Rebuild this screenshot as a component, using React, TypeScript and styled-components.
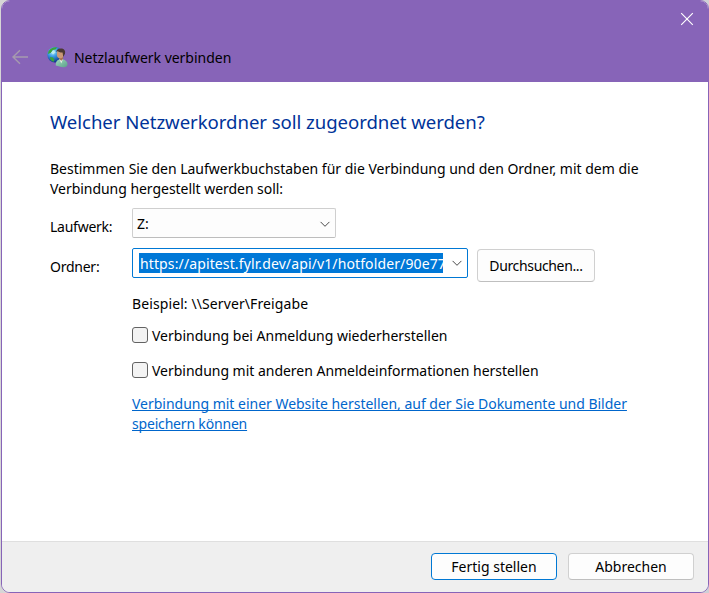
import React from "react";
import styled, { createGlobalStyle } from "styled-components";

const GlobalStyle = createGlobalStyle`
  *, *::before, *::after { box-sizing: border-box; }
  html, body { margin: 0; background: #d2d2d6; }
  body { overflow: hidden; }
  button, input { font: inherit; color: inherit; }
`;

const Desktop = styled.div`
  width: 709px;
  height: 593px;
  padding-left: 1px;
  background: linear-gradient(90deg, #d6d6d6, #cfcfd6);
  font-family: "Noto Sans", "Open Sans", sans-serif;
  font-size: 14px;
  line-height: 20px;
  color: #000;
`;

const Dialog = styled.div`
  display: flex;
  flex-direction: column;
  width: 708px;
  height: 593px;
  border: 1px solid #8764b8;
  border-radius: 9px;
  background: #fff;
  overflow: hidden;
`;

const TitleBar = styled.header`
  flex: none;
  height: 81px;
  background: #8764b8;
`;

const CaptionRow = styled.div`
  display: flex;
  justify-content: flex-end;
  height: 37px;
  padding: 11px 14px 0 0;
`;

const CloseButton = styled.button`
  width: 14px;
  height: 14px;
  padding: 0;
  border: 0;
  background: none;
  svg { display: block; }
`;

const TitleRow = styled.div`
  display: flex;
  align-items: center;
  height: 40px;
  padding-left: 9px;
`;

const BackIcon = styled.svg`
  flex: none;
  margin: 0 18px 2px 0;
`;

const NetworkUserIcon = styled.svg`
  flex: none;
  margin: 0 6px 2px 0;
`;

const Text = styled.span<{ $spacing?: number }>`
  letter-spacing: ${(p) => p.$spacing ?? 0}px;
  white-space: nowrap;
`;

const Content = styled.main`
  flex: 1;
  padding: 26px 48px 0;
`;

const Heading = styled.h1`
  margin: 0 0 24px;
  font-size: 18.6px;
  font-weight: 400;
  line-height: 27px;
  letter-spacing: -0.05px;
  color: #003399;
  white-space: nowrap;
`;

const Intro = styled.p`
  margin: 0;
  white-space: nowrap;
  letter-spacing: -0.01px;
`;

const Form = styled.div`
  display: grid;
  grid-template-columns: 82px 1fr;
  margin-top: 9px;
`;

const Label = styled.label`
  height: 40px;
  padding-top: 9px;
  letter-spacing: -0.25px;
`;

const FieldRow = styled.div`
  display: flex;
  align-items: flex-start;
`;

const Combo = styled.div<{ $width: number; $active?: boolean }>`
  display: flex;
  align-items: center;
  justify-content: space-between;
  width: ${(p) => p.$width}px;
  height: 30px;
  padding: ${(p) => (p.$active ? "0 4px 0 6px" : "1px 4px 0")};
  border: 1px solid ${(p) => (p.$active ? "#0078d4" : "#cfcfcf")};
  border-bottom-color: ${(p) => (p.$active ? "#0078d4" : "#bdbdbd")};
  border-radius: 2px;
  background: ${(p) => (p.$active ? "#fff" : "#fdfdfd")};
`;

const Selection = styled.span`
  width: 304px;
  height: 20px;
  margin-bottom: 1px;
  padding-left: 1px;
  overflow: hidden;
  background: #0078d7;
  color: #fff;
  line-height: 21px;
  letter-spacing: 0.12px;
  white-space: nowrap;
`;

const Button = styled.button<{ $width: number; $height: number; $default?: boolean; $spacing?: number }>`
  display: flex;
  align-items: center;
  justify-content: center;
  width: ${(p) => p.$width}px;
  height: ${(p) => p.$height}px;
  padding: 0;
  border: 1px solid ${(p) => (p.$default ? "#0078d4" : "#d0d0d0")};
  border-bottom-color: ${(p) => (p.$default ? "#0078d4" : "#bfbfbf")};
  border-radius: 4px;
  background: #fdfdfd;
  letter-spacing: ${(p) => p.$spacing ?? 0}px;
`;

const BrowseButton = styled(Button)`
  margin: 1px 0 0 9px;
`;

const Details = styled.div`
  grid-column: 2;
  padding-top: 6px;
`;

const CheckRow = styled.label<{ $gap: number }>`
  display: flex;
  align-items: center;
  gap: 4px;
  height: 20px;
  margin-top: ${(p) => p.$gap}px;
`;

const CheckBox = styled.input.attrs({ type: "checkbox" })`
  appearance: none;
  width: 16px;
  height: 16px;
  margin: 0 0 2px;
  border: 1px solid #626262;
  border-radius: 3px;
  background: #f3f3f3;
`;

const WebLink = styled.a`
  display: block;
  margin-top: 13px;
  color: #0066cc;
  text-decoration: underline;
  text-decoration-thickness: 1px;
  text-decoration-skip-ink: none;
  text-underline-offset: 1px;
`;

const Footer = styled.footer`
  display: flex;
  flex: none;
  justify-content: flex-end;
  gap: 11px;
  height: 51px;
  padding: 11px 14px 0 0;
  border-top: 1px solid #dfdfdf;
  background: #efefef;
`;

const Chevron = () => (
  <svg width="12" height="8" viewBox="0 0 12 8" fill="none">
    <path d="M1.6 1.9 6 6.3 10.4 1.9" stroke="#4a4a4a" strokeWidth="1" />
  </svg>
);

export default function App() {
  return (
    <>
      <GlobalStyle />
      <Desktop>
        <Dialog>
          <TitleBar>
            <CaptionRow>
              <CloseButton aria-label="Schließen">
                <svg width="14" height="14" viewBox="0 0 14 14">
                  <path d="M1.2 1.2 12.8 12.8M12.8 1.2 1.2 12.8" stroke="#fff" strokeWidth="1.15" />
                </svg>
              </CloseButton>
            </CaptionRow>
            <TitleRow>
              <BackIcon width="18" height="16" viewBox="0 0 18 16" fill="none">
                <path d="M9 1.2 2 8l7 6.8M2 8h15" stroke="#a69aae" strokeWidth="1.4" />
              </BackIcon>
              <NetworkUserIcon width="21" height="22" viewBox="0 0 21 22">
                <defs>
                  <radialGradient id="globe" cx="0.35" cy="0.3" r="0.75">
                    <stop offset="0" stopColor="#b4edff" />
                    <stop offset="0.4" stopColor="#3b9fe5" />
                    <stop offset="1" stopColor="#09257f" />
                  </radialGradient>
                  <linearGradient id="shirt" x1="0" y1="0" x2="1" y2="1">
                    <stop offset="0" stopColor="#a1d8bd" />
                    <stop offset="1" stopColor="#5ba18b" />
                  </linearGradient>
                </defs>
                <circle cx="8" cy="8.8" r="7.7" fill="url(#globe)" />
                <path d="M1.4 5.5C3.4 2 7 .9 10 1.4L8.6 3.4 5.8 4 4 6.8 1 8ZM3 11l3 .5 1.5 2.2L6.4 16 3.6 14Z" fill="#3ba33a" />
                <path d="M4 6.5 7 4.2l1.5 2.2L6 8.5Z" fill="#c4f1ef" opacity=".8" />
                <path d="M8.8 19.5c-.2-4 1.4-6.2 5-6.3 4 0 6.7 2 6.7 5.2 0 2.3-3.4 3.2-6.3 2.7Z" fill="url(#shirt)" />
                <path d="m12.2 13 2.1 4.5 1.7-4.4Z" fill="#e4eee7" />
                <path d="M12 10.3h4l.1 2.8-1.8 1.7-2.1-1.7Z" fill="#a87352" />
                <ellipse cx="13.2" cy="8" rx="3.4" ry="4.3" fill="#cb9a76" />
                <path d="M9.4 6.2C9.2 4 11 2.6 13.7 2.6c3.4 0 5 2 4.3 5.2l-1.8 3.2-.6-4.4c-2.3.1-4.4-.6-5-1.5Z" fill="#4b3833" />
              </NetworkUserIcon>
              <Text $spacing={-0.02}>Netzlaufwerk verbinden</Text>
            </TitleRow>
          </TitleBar>

          <Content>
            <Heading>Welcher Netzwerkordner soll zugeordnet werden?</Heading>
            <Intro>
              Bestimmen Sie den Laufwerkbuchstaben für die Verbindung und den Ordner, mit dem die
              <br />
              <Text $spacing={-0.04}>Verbindung hergestellt werden soll:</Text>
            </Intro>
            <Form>
              <Label>Laufwerk:</Label>
              <FieldRow>
                <Combo $width={204}>
                  <Text>Z:</Text>
                  <Chevron />
                </Combo>
              </FieldRow>
              <Label>Ordner:</Label>
              <FieldRow>
                <Combo $width={336} $active>
                  <Selection>https://apitest.fylr.dev/api/v1/hotfolder/90e77</Selection>
                  <Chevron />
                </Combo>
                <BrowseButton $width={118} $height={33} $spacing={-0.35}>Durchsuchen...</BrowseButton>
              </FieldRow>
              <Details>
                <Text $spacing={0.1}>Beispiel: \\Server\Freigabe</Text>
                <CheckRow $gap={12}>
                  <CheckBox />
                  <Text>Verbindung bei Anmeldung wiederherstellen</Text>
                </CheckRow>
                <CheckRow $gap={15}>
                  <CheckBox />
                  <Text $spacing={-0.02}>Verbindung mit anderen Anmeldeinformationen herstellen</Text>
                </CheckRow>
                <WebLink>
                  <Text $spacing={-0.014}>Verbindung mit einer Website herstellen, auf der Sie Dokumente und Bilder</Text>
                  <br />
                  <Text $spacing={-0.18}>speichern können</Text>
                </WebLink>
              </Details>
            </Form>
          </Content>

          <Footer>
            <Button $width={126} $height={27} $default>Fertig stellen</Button>
            <Button $width={126} $height={27}>Abbrechen</Button>
          </Footer>
        </Dialog>
      </Desktop>
    </>
  );
}
